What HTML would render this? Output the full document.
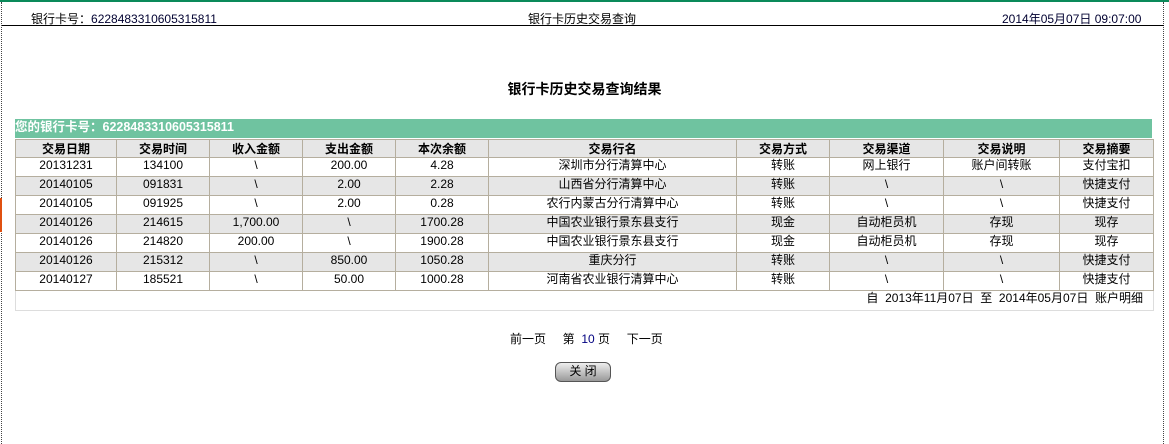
<!DOCTYPE html>
<html><head><meta charset="utf-8"><style>
body{margin:0;width:1169px;height:444px;position:relative;background:#fff;font-family:"Liberation Sans","Noto Sans CJK SC",sans-serif;font-size:12px;color:#000;overflow:hidden}
.top{position:absolute;left:0;top:0;width:1169px;height:2px;background:#0a8a5a}
.ld{position:absolute;left:1px;top:2px;height:442px;border-left:1px dotted #444}
.rd{position:absolute;left:1163px;top:2px;height:442px;border-left:1px dotted #444}
.or{position:absolute;left:0;top:198px;width:2px;height:34px;background:#e05010}
.hd{position:absolute;top:10px;font-size:12px}
.hl{position:absolute;left:2px;top:25px;width:1162px;height:1px;background:#000}
.title{position:absolute;left:0;width:1169px;top:79px;text-align:center;font-weight:bold;font-size:14px;padding-left:0}
.bar{position:absolute;left:15px;top:119px;width:1137px;height:19px;background:#6fc3a0;color:#fff;font-weight:bold;font-size:12.5px;line-height:16px}
table{position:absolute;left:15px;top:139px;border-collapse:collapse;width:1138px;table-layout:fixed}
td{border:1px solid #b5ae9e;height:18px;padding:0;text-align:center;font-size:12px;line-height:14px;vertical-align:top}
tr.g td{background:#e6e6e6}
th{border:1px solid #b5ae9e;background:#e6e6e6;height:16px;font-size:12px;font-weight:bold;padding:0}
.ft td{text-align:right;padding-right:10px;border-color:#ddd;height:19px}
.pg{position:absolute;top:330px;left:510px;font-size:12px}
.btn{position:absolute;left:555px;top:362px;width:54px;height:18px;border:1px solid #555;border-radius:6px;background:linear-gradient(#eee,#999);text-align:center;font-size:12px;line-height:17px}
</style></head><body>
<div class="top"></div><div class="ld"></div><div class="rd"></div><div class="or"></div>
<div class="hd" style="left:31px">银行卡号：<span style="color:#000030">6228483310605315811</span></div>
<div class="hd" style="left:528px">银行卡历史交易查询</div>
<div class="hd" style="left:1002px;color:#000030">2014年05月07日 09:07:00</div>
<div class="hl"></div>
<div class="title">银行卡历史交易查询结果</div>
<div class="bar">您的银行卡号：6228483310605315811</div>
<table>
<colgroup><col style="width:101px"><col style="width:93px"><col style="width:93px"><col style="width:93px"><col style="width:93px"><col style="width:248px"><col style="width:93px"><col style="width:114px"><col style="width:116px"><col style="width:94px"></colgroup>
<tr><th>交易日期</th><th>交易时间</th><th>收入金额</th><th>支出金额</th><th>本次余额</th><th>交易行名</th><th>交易方式</th><th>交易渠道</th><th>交易说明</th><th>交易摘要</th></tr>
<tr><td>20131231</td><td>134100</td><td>\</td><td>200.00</td><td>4.28</td><td>深圳市分行清算中心</td><td>转账</td><td>网上银行</td><td>账户间转账</td><td>支付宝扣</td></tr>
<tr class="g"><td>20140105</td><td>091831</td><td>\</td><td>2.00</td><td>2.28</td><td>山西省分行清算中心</td><td>转账</td><td>\</td><td>\</td><td>快捷支付</td></tr>
<tr><td>20140105</td><td>091925</td><td>\</td><td>2.00</td><td>0.28</td><td>农行内蒙古分行清算中心</td><td>转账</td><td>\</td><td>\</td><td>快捷支付</td></tr>
<tr class="g"><td>20140126</td><td>214615</td><td>1,700.00</td><td>\</td><td>1700.28</td><td>中国农业银行景东县支行</td><td>现金</td><td>自动柜员机</td><td>存现</td><td>现存</td></tr>
<tr><td>20140126</td><td>214820</td><td>200.00</td><td>\</td><td>1900.28</td><td>中国农业银行景东县支行</td><td>现金</td><td>自动柜员机</td><td>存现</td><td>现存</td></tr>
<tr class="g"><td>20140126</td><td>215312</td><td>\</td><td>850.00</td><td>1050.28</td><td>重庆分行</td><td>转账</td><td>\</td><td>\</td><td>快捷支付</td></tr>
<tr><td>20140127</td><td>185521</td><td>\</td><td>50.00</td><td>1000.28</td><td>河南省农业银行清算中心</td><td>转账</td><td>\</td><td>\</td><td>快捷支付</td></tr>
<tr class="ft"><td colspan="10" style="padding-right:10px">自&nbsp; 2013年11月07日&nbsp; 至&nbsp; 2014年05月07日&nbsp; 账户明细</td></tr>
</table>
<div class="pg">前一页&nbsp;&nbsp;&nbsp;&nbsp; 第&nbsp; <span style="color:#000080">10</span> 页&nbsp;&nbsp;&nbsp;&nbsp; 下一页</div>
<div class="btn">关&nbsp;闭</div>
</body></html>
